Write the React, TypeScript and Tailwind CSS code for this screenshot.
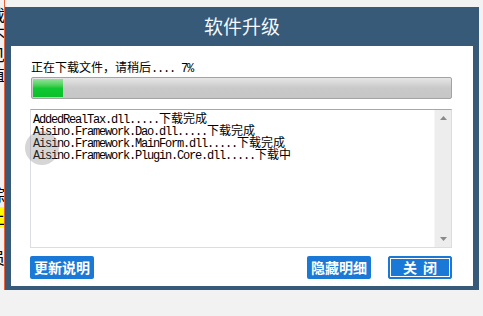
// App.tsx
// * software upgrade dialog w/ progress bar, download log & buttons

const MONO = { fontFamily: '"Liberation Mono", "Noto Sans CJK SC", monospace' };

const logLines = [
  { file: 'AddedRealTax.dll.....', status: '下载完成' },
  { file: 'Aisino.Framework.Dao.dll.....', status: '下载完成' },
  { file: 'Aisino.Framework.MainForm.dll.....', status: '下载完成' },
  { file: 'Aisino.Framework.Plugin.Core.dll.....', status: '下载中' },
];

// * clipped chars of the window behind the dialog
function BackEdge() {
  const cell = 'h-[20px] -ml-[11px] overflow-hidden leading-[20px]';
  return (
    <div className="w-[4px] h-full overflow-hidden flex flex-col text-[16px] text-black font-['Noto_Sans_CJK_SC',sans-serif]">
      <div className={cell + ' mt-[4px]'}>载</div>
      <div className={cell}>不</div>
      <div className={cell}>见</div>
      <div className={cell}>值</div>
      <div className={cell + ' mt-[100px]'}>综</div>
      <div className={cell + ' mt-[3px] bg-[#ffff00]'}>上</div>
      <div className={cell + ' mt-[20px]'}>员</div>
    </div>
  );
}

function BlueButton({ label, focused }: { label: string; focused?: boolean }) {
  return (
    <button
      className={
        focused
          ? 'w-[64px] h-[23px] rounded-[2px] bg-[#1a78d6] border border-[#1a78d6] flex items-center justify-center'
          : 'w-[64px] h-[23px] rounded-[2px] bg-[#1a78d6] flex items-center justify-center'
      }
    >
      <span
        className={
          focused
            ? 'w-[60px] h-[19px] border border-white flex items-center justify-center text-white text-[14px] font-bold tracking-[6px] pl-[6px] font-["Noto_Sans_CJK_SC",sans-serif]'
            : 'text-white text-[14px] font-bold font-["Noto_Sans_CJK_SC",sans-serif]'
        }
      >
        {label}
      </span>
    </button>
  );
}

export default function App() {
  return (
    <div className="w-[483px] h-[316px] bg-[#f3f2f3] flex relative overflow-hidden">
      <BackEdge />
      <div className="w-px h-[290px] bg-[#e8623a]" />

      {/* Dialog */}
      <div className="flex flex-col pt-[7px]">
        <div className="w-[474px] h-[283px] bg-[#365a78] flex flex-col pl-[6px] pr-[6px] pb-[4px]">
          <div className="h-[39px] flex items-center justify-center text-[19px] text-[#f4f8ff] font-['Noto_Sans_CJK_SC',sans-serif]">
            软件升级
          </div>

          <div className="flex-1 bg-white flex flex-col pl-[19px] pr-[21px]">
            <div className="mt-[16px] h-[14px] flex items-center text-[12px] leading-[12px] text-black" style={MONO}>
              <span className="pl-[1px]">正在下载文件，请稍后</span>
              <span className="tracking-[-1.2px]">.... 7%</span>
            </div>

            {/* Progress */}
            <div className="mt-[1px] ml-[1px] h-[22px] border border-[#a3a3a3] rounded-[2px] bg-gradient-to-b from-[#e6e6e6] via-[#c9c9c9] to-[#c6c6c6] flex p-px">
              <div className="w-[30px] h-full bg-gradient-to-b from-[#8fe39a] via-[#10c832] to-[#0bbf2a]" />
            </div>

            {/* Log */}
            <div className="mt-[10px] h-[139px] border border-[#dcdce4] border-t-[#a8a8a8] flex">
              <div className="flex-1 pl-[2px] pt-[4px] flex flex-col text-[12px] leading-[12px] text-black" style={MONO}>
                {logLines.map((l) => (
                  <div key={l.file} className="whitespace-nowrap">
                    <span className="tracking-[-1.2px]">{l.file}</span>
                    <span>{l.status}</span>
                  </div>
                ))}
              </div>
              <div className="w-[17px] bg-[#ededed] border-l border-[#f6f6f6] flex flex-col justify-between items-center py-[6px]">
                <svg width="7" height="4" viewBox="0 0 7 4"><path d="M3.5 0 L7 4 L0 4 Z" fill="#8a8a8a" /></svg>
                <svg width="7" height="4" viewBox="0 0 7 4"><path d="M0 0 L7 0 L3.5 4 Z" fill="#8a8a8a" /></svg>
              </div>
            </div>

            {/* Buttons */}
            <div className="mt-[8px] flex items-center">
              <BlueButton label="更新说明" />
              <div className="flex-1" />
              <BlueButton label="隐藏明细" />
              <div className="w-[17px]" />
              <BlueButton label="关闭" focused />
            </div>
          </div>
        </div>
      </div>

      {/* cursor highlight */}
      <div className="absolute left-[25px] top-[131px] w-[34px] h-[34px] rounded-full bg-[rgba(120,120,120,0.3)]" />
    </div>
  );
}
